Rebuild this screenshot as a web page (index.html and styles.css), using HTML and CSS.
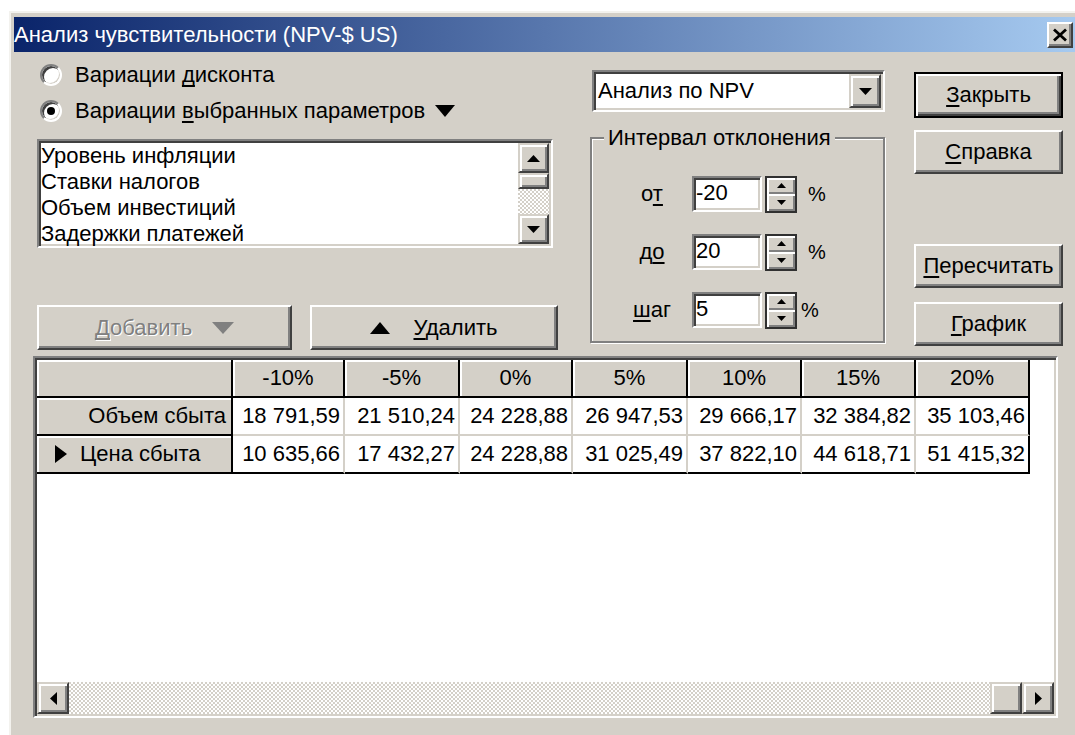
FILE: index.html
```html
<!DOCTYPE html>
<html lang="ru">
<head>
<meta charset="utf-8">
<title>Анализ чувствительности</title>
<link rel="stylesheet" href="styles.css">
</head>
<body>
<div class="window">
  <div class="titlebar">
    <span class="title">Анализ чувствительности (NPV-$ US)</span>
    <button class="close-btn" type="button">
      <svg width="16" height="14" viewBox="0 0 16 14"><path d="M2 1.5 L14 12.5 M14 1.5 L2 12.5" stroke="#000" stroke-width="2.8" fill="none"/></svg>
    </button>
  </div>

  <div class="client">
    <div class="top">
      <div class="col-left">
        <div class="radio"><span class="rb"></span><span>Вариации <u>д</u>исконта</span></div>
        <div class="radio"><span class="rb checked"></span><span>Вариации <u>в</u>ыбранных параметров</span>
          <svg class="tri-big" width="20" height="12" viewBox="0 0 20 12"><polygon points="0,0 20,0 10,12" fill="#000"/></svg>
        </div>

        <div class="listbox">
          <ul class="items">
            <li>Уровень инфляции</li>
            <li>Ставки налогов</li>
            <li>Объем инвестиций</li>
            <li>Задержки платежей</li>
          </ul>
          <div class="vscroll">
            <div class="sbtn sbtn-v"><svg width="13" height="7" viewBox="0 0 13 7"><polygon points="0,7 13,7 6.5,0" fill="#000"/></svg></div>
            <div class="thumb-v"></div>
            <div class="track"></div>
            <div class="sbtn sbtn-v"><svg width="13" height="7" viewBox="0 0 13 7"><polygon points="0,0 13,0 6.5,7" fill="#000"/></svg></div>
          </div>
        </div>

        <div class="btnrow">
          <button class="btn btn-add disabled" type="button"><span><u>Д</u>обавить</span>
            <svg width="22" height="12" viewBox="0 0 22 12"><polygon points="0,0 22,0 11,12" fill="#808080"/></svg>
          </button>
          <button class="btn btn-del" type="button">
            <svg width="20" height="12" viewBox="0 0 20 12"><polygon points="0,12 20,12 10,0" fill="#000"/></svg>
            <span><u>У</u>далить</span>
          </button>
        </div>
      </div>

      <div class="col-mid">
        <div class="combo">
          <span class="combo-text">Анализ по NPV</span>
          <div class="sbtn combo-btn"><svg width="13" height="7" viewBox="0 0 13 7"><polygon points="0,0 13,0 6.5,7" fill="#000"/></svg></div>
        </div>

        <fieldset class="group">
          <legend>Интервал отклонения</legend>
          <div class="spinrow">
            <span class="lbl">о<u>т</u></span>
            <span class="edit">-20</span>
            <span class="spin">
              <span class="spin-half"><svg width="9" height="5" viewBox="0 0 9 5"><polygon points="0,5 9,5 4.5,0" fill="#000"/></svg></span>
              <span class="spin-half"><svg width="9" height="5" viewBox="0 0 9 5"><polygon points="0,0 9,0 4.5,5" fill="#000"/></svg></span>
            </span>
            <span class="pct">%</span>
          </div>
          <div class="spinrow">
            <span class="lbl">д<u>о</u></span>
            <span class="edit">20</span>
            <span class="spin">
              <span class="spin-half"><svg width="9" height="5" viewBox="0 0 9 5"><polygon points="0,5 9,5 4.5,0" fill="#000"/></svg></span>
              <span class="spin-half"><svg width="9" height="5" viewBox="0 0 9 5"><polygon points="0,0 9,0 4.5,5" fill="#000"/></svg></span>
            </span>
            <span class="pct">%</span>
          </div>
          <div class="spinrow">
            <span class="lbl"><u>ш</u>аг</span>
            <span class="edit">5</span>
            <span class="spin">
              <span class="spin-half"><svg width="9" height="5" viewBox="0 0 9 5"><polygon points="0,5 9,5 4.5,0" fill="#000"/></svg></span>
              <span class="spin-half"><svg width="9" height="5" viewBox="0 0 9 5"><polygon points="0,0 9,0 4.5,5" fill="#000"/></svg></span>
            </span>
            <span class="pct pct-tight">%</span>
          </div>
        </fieldset>
      </div>

      <div class="col-right">
        <button class="btn btn-default btn-close" type="button"><span><u>З</u>акрыть</span></button>
        <button class="btn btn-help" type="button"><span><u>С</u>правка</span></button>
        <button class="btn btn-recalc" type="button"><span><u>П</u>ересчитать</span></button>
        <button class="btn btn-chart" type="button"><span><u>Г</u>рафик</span></button>
      </div>
    </div>

    <div class="grid">
      <div class="cells">
        <div class="fx"></div>
        <div class="fx hd">-10%</div>
        <div class="fx hd">-5%</div>
        <div class="fx hd">0%</div>
        <div class="fx hd">5%</div>
        <div class="fx hd">10%</div>
        <div class="fx hd">15%</div>
        <div class="fx hd">20%</div>

        <div class="fx rowname">Объем сбыта</div>
        <div class="dc">18 791,59</div>
        <div class="dc">21 510,24</div>
        <div class="dc">24 228,88</div>
        <div class="dc">26 947,53</div>
        <div class="dc">29 666,17</div>
        <div class="dc">32 384,82</div>
        <div class="dc">35 103,46</div>

        <div class="fx rowname current"><svg width="12" height="18" viewBox="0 0 12 18"><polygon points="0,0 12,9 0,18" fill="#000"/></svg><span>Цена сбыта</span></div>
        <div class="dc">10 635,66</div>
        <div class="dc">17 432,27</div>
        <div class="dc">24 228,88</div>
        <div class="dc">31 025,49</div>
        <div class="dc">37 822,10</div>
        <div class="dc">44 618,71</div>
        <div class="dc">51 415,32</div>
      </div>
      <div class="grid-fill"></div>
      <div class="hscroll">
        <div class="sbtn sbtn-h"><svg width="7" height="13" viewBox="0 0 7 13"><polygon points="7,0 0,6.5 7,13" fill="#000"/></svg></div>
        <div class="track"></div>
        <div class="thumb-h"></div>
        <div class="sbtn sbtn-h"><svg width="7" height="13" viewBox="0 0 7 13"><polygon points="0,0 7,6.5 0,13" fill="#000"/></svg></div>
      </div>
    </div>
  </div>
</div>
</body>
</html>
```

FILE: styles.css
```css
* {
  box-sizing: border-box;
}

html,
body {
  margin: 0;
  height: 100%;
  overflow: hidden;
  background: #fff;
}

body {
  font-family: "Liberation Sans", Arial, sans-serif;
  font-size: 22px;
  color: #000;
}

/* keyboard mnemonic underline */
u {
  text-decoration-thickness: 2px;
  text-underline-offset: 3px;
  text-decoration-skip-ink: none;
}

svg {
  display: block;
  flex: none;
}

/* ---------- window frame ---------- */
.window {
  margin: 11px 0 0 9px;
  width: 1073px;
  height: 740px;
  background: #d4d0c8;
  border-top: 2px solid #f3f2ee;
  border-left: 2px solid #f3f2ee;
  padding: 4px 5px 0 3px;
}

.titlebar {
  height: 35px;
  display: flex;
  align-items: center;
  justify-content: space-between;
  padding: 0 4px 0 0;
  background: linear-gradient(to right, #0a246a, #a6caf0);
  color: #fff;
}

.title {
  line-height: 26px;
  white-space: nowrap;
}

.close-btn {
  width: 26px;
  height: 26px;
  padding: 0;
  display: flex;
  align-items: center;
  justify-content: center;
  background: #d4d0c8;
  border: 2px solid;
  border-color: #fff #404040 #404040 #fff;
  box-shadow: inset -2px -2px 0 #808080;
}

.client {
  padding-left: 19px;
}

.top {
  display: flex;
  padding-left: 4px;
}

/* ---------- shared 3D pieces ---------- */
.btn {
  display: flex;
  align-items: center;
  justify-content: center;
  padding: 0;
  background: #d4d0c8;
  font: inherit;
  color: #000;
  border: 2px solid;
  border-color: #fff #404040 #404040 #fff;
  box-shadow: inset -2px -2px 0 #808080;
}

.btn-default {
  border: 2px solid #000;
  box-shadow: inset 2px 2px 0 #fff, inset -2px -2px 0 #404040, inset -4px -4px 0 #808080;
}

.sbtn {
  display: flex;
  align-items: center;
  justify-content: center;
  background: #d4d0c8;
  border: 2px solid;
  border-color: #d4d0c8 #404040 #404040 #d4d0c8;
  box-shadow: inset 2px 2px 0 #fff, inset -2px -2px 0 #808080;
}

.track {
  flex: 1;
  background: repeating-conic-gradient(#ffffff 0 25%, #d4d0c8 0 50%) 0 0 / 4px 4px;
}

/* ---------- left column ---------- */
.col-left {
  width: 521px;
  padding-top: 5px;
}

.radio {
  display: flex;
  align-items: center;
  height: 36px;
  line-height: 26px;
}

.rb {
  width: 22px;
  height: 22px;
  margin: 0 13px 0 3px;
  border-radius: 50%;
  background: #fff;
  border: 2px solid;
  border-color: #808080 #fff #fff #808080;
  box-shadow: inset 2px 2px 0 #404040, inset -1px -1px 0 #d4d0c8;
  display: grid;
  place-items: center;
}

.rb.checked::after {
  content: "";
  width: 8px;
  height: 8px;
  border-radius: 50%;
  background: #000;
}

.tri-big {
  margin-left: 10px;
}

.listbox {
  margin-top: 10px;
  width: 516px;
  height: 109px;
  display: flex;
  padding: 2px;
  background: #fff;
  border: 2px solid;
  border-color: #808080 #fff #fff #808080;
  box-shadow: inset 2px 2px 0 #404040, inset -2px -2px 0 #d4d0c8;
}

.items {
  flex: 1;
  margin: 0;
  padding: 0;
  list-style: none;
}

.items li {
  height: 26px;
  line-height: 25px;
  white-space: nowrap;
}

.vscroll {
  width: 31px;
  display: flex;
  flex-direction: column;
}

.sbtn-v {
  height: 30px;
}

.thumb-v {
  height: 16px;
  background: #d4d0c8;
  border: 2px solid;
  border-color: #d4d0c8 #404040 #404040 #d4d0c8;
  box-shadow: inset 2px 2px 0 #fff, inset -2px -2px 0 #808080;
}

.btnrow {
  display: flex;
  gap: 18px;
  margin-top: 57px;
}

.btn-add {
  width: 255px;
  height: 45px;
  gap: 20px;
}

.btn-del {
  width: 248px;
  height: 45px;
  gap: 23px;
}

.disabled {
  color: #808080;
  text-shadow: 1px 1px 0 #fff;
}

/* ---------- middle column ---------- */
.col-mid {
  width: 295px;
  margin-left: 32px;
  display: flex;
  flex-direction: column;
}

.combo {
  margin: 18px 0 0 2px;
  width: 293px;
  height: 42px;
  display: flex;
  padding: 2px;
  background: #fff;
  border: 2px solid;
  border-color: #808080 #fff #fff #808080;
  box-shadow: inset 2px 2px 0 #404040, inset -2px -2px 0 #d4d0c8;
}

.combo-text {
  flex: 1;
  line-height: 33px;
  padding-left: 2px;
  white-space: nowrap;
}

.combo-btn {
  width: 32px;
  height: 34px;
}

.group {
  margin: 13px 0 0;
  padding: 25px 0 0 0;
  height: 218px;
  min-width: 0;
  border: 2px solid #808080;
  box-shadow: inset 1px 1px 0 #fff, 1px 1px 0 #fff;
}

.group legend {
  margin-left: 12px;
  padding: 0 4px;
  line-height: 26px;
  background: #d4d0c8;
  white-space: nowrap;
}

.spinrow {
  display: flex;
  align-items: center;
  height: 36px;
  padding-left: 20px;
  margin-bottom: 22px;
}

.lbl {
  width: 80px;
  text-align: center;
}

.edit {
  width: 70px;
  height: 36px;
  padding-left: 2px;
  line-height: 29px;
  background: #fff;
  border: 2px solid;
  border-color: #808080 #fff #fff #808080;
  box-shadow: inset 2px 2px 0 #404040, inset -2px -2px 0 #d4d0c8;
}

.spin {
  margin-left: 3px;
  width: 32px;
  height: 37px;
  display: flex;
  flex-direction: column;
  border: 2px solid #303030;
}

.spin-half {
  flex: 1;
  display: flex;
  align-items: center;
  justify-content: center;
  background: #d4d0c8;
  box-shadow: inset 2px 2px 0 #fff, inset -2px -2px 0 #808080;
}

.pct {
  margin-left: 11px;
  font-size: 20px;
}

.pct-tight {
  margin-left: 4px;
}

/* ---------- right column ---------- */
.col-right {
  width: 149px;
  margin-left: 29px;
  display: flex;
  flex-direction: column;
}

.col-right .btn {
  width: 149px;
  height: 44px;
}

.col-right .btn-close {
  margin-top: 20px;
  height: 46px;
}

.btn-help {
  margin-top: 12px;
}

.btn-recalc {
  margin-top: 70px;
}

.btn-chart {
  margin-top: 14px;
}

/* ---------- data grid ---------- */
.grid {
  margin-top: 6px;
  width: 1025px;
  height: 362px;
  display: flex;
  flex-direction: column;
  padding: 2px;
  background: #fff;
  border: 2px solid;
  border-color: #808080 #fff #fff #808080;
  box-shadow: inset 2px 2px 0 #404040, inset -2px -2px 0 #d4d0c8;
}

.cells {
  display: grid;
  grid-template-columns: 196px 112px 115px 113px 115px 114px 114px 114px;
  grid-auto-rows: 38px;
  width: 993px;
  line-height: 36px;
  white-space: nowrap;
}

.fx {
  background: #d4d0c8;
  border-right: 2px solid #000;
  border-bottom: 2px solid #000;
  box-shadow: inset 2px 2px 0 #fff;
}

.hd {
  text-align: center;
}

.rowname {
  text-align: right;
  padding-right: 5px;
}

.rowname.current {
  display: flex;
  align-items: center;
  gap: 13px;
  padding-left: 18px;
  text-align: left;
}

.dc {
  text-align: right;
  padding-right: 3px;
  border-right: 2px solid #d4d0c8;
  border-bottom: 2px solid #d4d0c8;
}

.cells > :nth-child(8n) {
  border-right-color: #000;
}

.cells > :nth-last-child(-n + 8) {
  border-bottom-color: #000;
}

.grid-fill {
  flex: 1;
}

.hscroll {
  height: 32px;
  display: flex;
}

.sbtn-h {
  width: 32px;
}

.thumb-h {
  width: 32px;
  background: #d4d0c8;
  border: 2px solid;
  border-color: #d4d0c8 #404040 #404040 #d4d0c8;
  box-shadow: inset 2px 2px 0 #fff, inset -2px -2px 0 #808080;
}
```
